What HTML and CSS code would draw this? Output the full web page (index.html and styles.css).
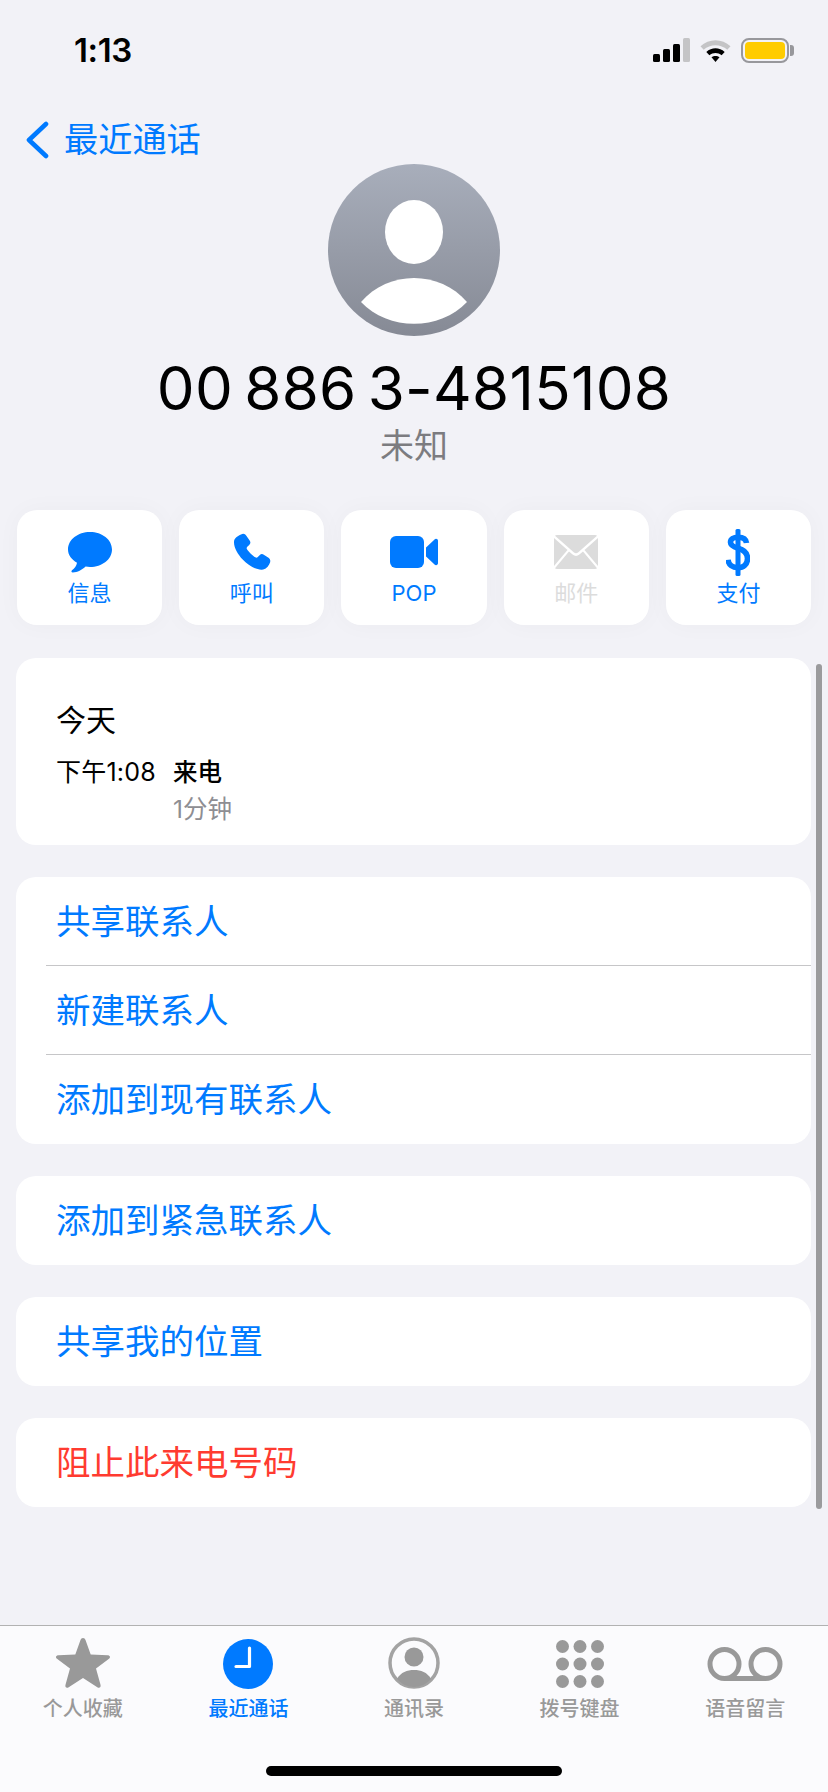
FILE: index.html
```html
<!DOCTYPE html>
<html lang="zh-CN">
<head>
<meta charset="utf-8">
<title>最近通话</title>
<link rel="stylesheet" href="styles.css">
</head>
<body>
<div class="screen">
  <div class="status">
    <span class="time">1:13</span>
    <div class="status-icons">
      <svg class="signal" width="37" height="24" viewBox="0 0 37 24">
        <rect x="0" y="16" width="7" height="8" rx="1.5" fill="#000"/>
        <rect x="10" y="11" width="7" height="13" rx="1.5" fill="#000"/>
        <rect x="20" y="6" width="7" height="18" rx="1.5" fill="#000"/>
        <rect x="30" y="0" width="7" height="24" rx="1.5" fill="#c4c4c6"/>
      </svg>
      <svg class="wifi" width="31" height="24" viewBox="0 0 31 24">
        <path d="M0.5 8.2C8.8 0.2 22.2 0.2 30.500 8.2L27.300 11.700C20.800 5.600 10.200 5.600 3.700 11.700Z" fill="#c4c4c6"/>
        <path d="M6.300 14C11.600 9 19.400 9 24.700 14L21.600 17.300C18 14.200 13 14.200 9.400 17.300Z" fill="#000"/>
        <path d="M11.500 19.300C13.800 17.400 17.200 17.400 19.500 19.300L15.500 24Z" fill="#000"/>
      </svg>
      <div class="battery"><div class="battery-fill"></div><div class="battery-cap"></div></div>
    </div>
  </div>

  <div class="nav">
    <svg width="24" height="38" viewBox="0 0 24 38"><path d="M21 3L4 19L21 35" fill="none" stroke="#007aff" stroke-width="4.600" stroke-linecap="round" stroke-linejoin="round"/></svg>
    <span class="nav-label">最近通话</span>
  </div>

  <div class="hero">
    <svg class="avatar" width="172" height="172" viewBox="0 0 172 172">
      <defs><linearGradient id="avatarGrad" x1="0" y1="0" x2="0" y2="1"><stop offset="0" stop-color="#a8aebb"/><stop offset="1" stop-color="#868a95"/></linearGradient></defs>
      <circle cx="86" cy="86" r="86" fill="url(#avatarGrad)"/>
      <ellipse cx="86" cy="68" rx="29" ry="32" fill="#fff"/>
      <path d="M33 138C60 106 112 106 139 138C112 167 60 167 33 138Z" fill="#fff"/>
    </svg>
    <div class="number">00 886 3-4815108</div>
    <div class="subtitle">未知</div>
  </div>

  <div class="actions">
    <div class="action">
      <div class="icon-slot"><svg width="46" height="44" viewBox="0 0 46 44"><path d="M23 2C35 2 45 9.500 45 19.500C45 29.500 35 37 23 37C21.500 37 20 36.900 18.600 36.600C15 39.800 10.500 42.500 5.800 42.500C4.300 42.500 4 41 5 40.200C7.500 38.500 9.500 35.800 10 32.700C4.500 29.500 1 24.900 1 19.500C1 9.500 11 2 23 2Z" fill="#007aff"/></svg></div>
      <span class="action-label">信息</span>
    </div>
    <div class="action">
      <div class="icon-slot"><svg width="38" height="38" viewBox="0 0 38 38"><path d="M8 1.500C10.500 0.200 12 1 13.500 3L16.800 7.800C17.800 9.300 17.500 10.800 16.200 12L14.300 13.800C13.500 14.600 13.500 15.400 14 16.300C15.500 18.700 19.800 23 22.300 24.300C23.300 24.800 24 24.800 24.800 24L26.600 22.200C27.900 21 29.200 20.700 30.800 21.700L35.500 24.800C37.500 26.200 37.700 28.200 36.700 30.300C35.300 33.500 33 36.500 28.700 36.700C22 36.900 14.500 31.300 9.700 26.500C5 21.500 0.800 14.500 1 8.800C1.100 5.200 4.800 2.800 8 1.500Z" fill="#007aff"/></svg></div>
      <span class="action-label">呼叫</span>
    </div>
    <div class="action">
      <div class="icon-slot"><svg width="48" height="32" viewBox="0 0 48 32"><rect x="0" y="0" width="34" height="32" rx="6" fill="#007aff"/><path d="M36 11.500L44.500 3.500C46 2.200 48 3 48 5V27C48 29 46 29.800 44.500 28.500L36 20.500Z" fill="#007aff"/></svg></div>
      <span class="action-label">POP</span>
    </div>
    <div class="action action-off">
      <div class="icon-slot"><svg width="44" height="34" viewBox="0 0 44 34"><path d="M1 0.800L20 17.500C21.200 18.600 22.800 18.600 24 17.500L43 0.800C42.600 0.300 42 0 41 0H3C2 0 1.400 0.300 1 0.800Z" fill="#dcdcdc"/><path d="M0 3L13.500 15L0 31ZM44 3L30.500 15L44 31ZM15 16.400L18.600 19.500C20.800 21.400 23.200 21.400 25.400 19.500L29 16.400L43 33.200C42.500 33.700 41.900 34 41 34H3C2.100 34 1.500 33.700 1 33.200Z" fill="#dcdcdc"/></svg></div>
      <span class="action-label">邮件</span>
    </div>
    <div class="action">
      <div class="icon-slot"><svg width="24" height="47" viewBox="0 0 24 47"><path d="M20.500 14C20 9.800 16.500 8.200 12 8.200C7.500 8.200 4.500 10.200 4.500 13.300C4.500 16.500 7.300 17.900 12.200 19.300C18.500 21.100 21.500 24.300 21.500 29.500C21.500 35 17.500 38.600 12 38.600C6.500 38.600 2.500 35.800 2 30.800" fill="none" stroke="#007aff" stroke-width="5.600"/><rect x="9.500" y="0" width="5" height="47" rx="1.500" fill="#007aff"/></svg></div>
      <span class="action-label">支付</span>
    </div>
  </div>

  <div class="card call-card">
    <div class="call-day">今天</div>
    <div class="call-row">
      <span class="call-time">下午1:08</span>
      <div class="call-info">
        <div class="call-type">来电</div>
        <div class="call-length">1分钟</div>
      </div>
    </div>
  </div>

  <div class="card card-group">
    <div class="row row-first">共享联系人</div>
    <div class="row row-sep">新建联系人</div>
    <div class="row row-sep">添加到现有联系人</div>
  </div>
  <div class="card"><div class="row">添加到紧急联系人</div></div>
  <div class="card"><div class="row">共享我的位置</div></div>
  <div class="card"><div class="row row-danger">阻止此来电号码</div></div>

  <div class="tabbar">
    <div class="tabs">
      <div class="tab">
        <svg class="tab-icon" width="56" height="52" viewBox="0 0 56 52"><path d="M28 1C29.300 1 30 1.800 30.500 3L35.700 17.500L52.500 18.200C55 18.300 55.800 20.300 54 21.800L41 31.500L45.500 47.800C46.200 50.300 44.300 51.500 42.300 50.200L28 41L13.700 50.200C11.700 51.500 9.800 50.300 10.500 47.800L15 31.500L2 21.800C0.200 20.300 1 18.300 3.500 18.200L20.300 17.500L25.500 3C26 1.800 26.700 1 28 1Z" fill="#999"/></svg>
        <span class="tab-label">个人收藏</span>
      </div>
      <div class="tab tab-active">
        <svg class="tab-icon" width="50" height="50" viewBox="0 0 50 50"><circle cx="25" cy="25" r="25" fill="#007aff"/><path d="M26.500 9V27.500H13" fill="none" stroke="#fff" stroke-width="3.200" stroke-linecap="round" stroke-linejoin="round"/></svg>
        <span class="tab-label">最近通话</span>
      </div>
      <div class="tab">
        <svg class="tab-icon" width="52" height="52" viewBox="0 0 52 52"><circle cx="26" cy="26" r="24" fill="none" stroke="#a3a3a3" stroke-width="3.500"/><circle cx="26" cy="20" r="9.500" fill="#999"/><path d="M9 42C13 35 19 33 26 33C33 33 39 35 43 42C38.500 47 32.500 50 26 50C19.500 50 13.500 47 9 42Z" fill="#999"/></svg>
        <span class="tab-label">通讯录</span>
      </div>
      <div class="tab">
        <svg class="tab-icon" width="50" height="50" viewBox="0 0 50 50"><g fill="#999"><circle cx="7.500" cy="7.500" r="6.500"/><circle cx="25" cy="7.500" r="6.500"/><circle cx="42.500" cy="7.500" r="6.500"/><circle cx="7.500" cy="25" r="6.500"/><circle cx="25" cy="25" r="6.500"/><circle cx="42.500" cy="25" r="6.500"/><circle cx="7.500" cy="42.500" r="6.500"/><circle cx="25" cy="42.500" r="6.500"/><circle cx="42.500" cy="42.500" r="6.500"/></g></svg>
        <span class="tab-label">拨号键盘</span>
      </div>
      <div class="tab">
        <svg class="tab-icon" width="76" height="50" viewBox="0 0 76 50"><g fill="none" stroke="#999" stroke-width="5"><circle cx="17.500" cy="25" r="14.500"/><circle cx="58.500" cy="25" r="14.500"/><path d="M17.500 39.500H58.500"/></g></svg>
        <span class="tab-label">语音留言</span>
      </div>
    </div>
    <div class="home-bar"></div>
  </div>

  <div class="scrollbar"></div>
</div>
</body>
</html>
```
FILE: styles.css
```css
* { box-sizing: border-box; }
html, body { margin: 0; padding: 0; }
body {
  font-family: "Inter", "Noto Sans CJK SC", sans-serif;
  background: #f2f2f7;
}
.screen {
  position: relative;
  width: 828px;
  height: 1792px;
  display: flex;
  flex-direction: column;
  background: #f2f2f7;
  overflow: hidden;
}
.status {
  height: 100px;
  display: flex;
  align-items: center;
  justify-content: space-between;
  padding: 0 33px 0 74px;
}
.time {
  font-family: "Inter", sans-serif;
  font-size: 33px;
  font-weight: 600;
  color: #000;
  letter-spacing: -0.4px;
}
.status-icons { display: flex; align-items: center; gap: 10px; }
.battery {
  position: relative;
  width: 48px;
  height: 25px;
  border: 2px solid #98989c;
  border-radius: 8px;
  padding: 2px;
  margin-right: 6px;
}
.battery-fill { width: 100%; height: 100%; background: #ffcc00; border-radius: 4px; }
.battery-cap {
  position: absolute;
  right: -7px;
  top: 5px;
  width: 4px;
  height: 11px;
  background: #98989c;
  border-radius: 0 3px 3px 0;
}
.nav {
  height: 64px;
  display: flex;
  align-items: center;
  gap: 15px;
  padding: 16px 0 0 25px;
}
.nav-label { font-size: 34.200px; color: #007aff; line-height: 40px; }
.hero { display: flex; flex-direction: column; align-items: center; }
.avatar { display: block; }
.number {
  margin-top: 16px;
  font-size: 60px;
  line-height: 72px;
  letter-spacing: 0.3px;
  word-spacing: -6px;
  color: #000;
}
.subtitle {
  font-size: 34px;
  line-height: 44px;
  color: #7c7c80;
}
.actions {
  margin: 42px 17px 0;
  display: grid;
  grid-template-columns: repeat(5, 1fr);
  column-gap: 17px;
}
.action {
  height: 115px;
  background: #fff;
  border-radius: 20px;
  box-shadow: 0 0 24px rgba(0, 0, 0, 0.03);
  display: flex;
  flex-direction: column;
  align-items: center;
  padding-top: 17px;
  color: #007aff;
}
.icon-slot { height: 50px; display: flex; align-items: center; justify-content: center; margin-bottom: 3px; }
.icon-slot svg { display: block; }
.action-label { font-size: 22px; line-height: 26px; }
.action-off .action-label { color: #dcdcdc; }
.card {
  margin: 32px 17px 0 16px;
  background: #fff;
  border-radius: 20px;
}
.call-card {
  height: 187px;
  margin-top: 33px;
  padding: 42px 0 0 40px;
}
.call-day { font-size: 30px; line-height: 40px; color: #000; }
.call-row { display: flex; margin-top: 14px; }
.call-time { width: 117px; font-size: 25px; line-height: 36px; letter-spacing: 0.2px; color: #000; }
.call-info { font-size: 24.500px; line-height: 36px; }
.call-type { font-weight: 500; color: #000; }
.call-length { color: #8e8e93; margin-top: 1px; }
.card-group { padding-bottom: 1px; }
.row {
  height: 89px;
  padding: 0 0 5px 40px;
  display: flex;
  align-items: center;
  font-size: 34.500px;
  color: #007aff;
}
.row-first { height: 88px; }
.row-sep { border-top: 1px solid #c6c6c8; margin-left: 30px; padding-left: 10px; }
.row-danger { color: #ff3b30; }
.tabbar {
  margin-top: auto;
  height: 167px;
  background: #fbfbfd;
  border-top: 1px solid #b2b2b2;
  display: flex;
  flex-direction: column;
  align-items: center;
}
.tabs { width: 100%; display: grid; grid-template-columns: repeat(5, 1fr); }
.tab {
  height: 95px;
  display: flex;
  flex-direction: column;
  align-items: center;
  justify-content: flex-end;
  color: #999;
}
.tab-icon { display: block; margin-bottom: 8px; }
.tab-label { font-size: 20px; line-height: 24px; font-weight: 500; }
.tab-active { color: #007aff; }
.home-bar { width: 296px; height: 10px; margin-top: 45px; border-radius: 5px; background: #000; }
.scrollbar {
  position: absolute;
  left: 816px;
  top: 664px;
  width: 6px;
  height: 845px;
  border-radius: 3px;
  background: #9b9b9d;
}
```
